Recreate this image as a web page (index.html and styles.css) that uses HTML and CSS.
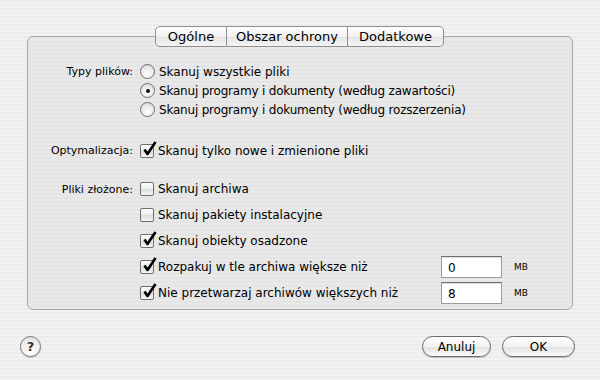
FILE: index.html
```html
<!DOCTYPE html>
<html>
  <head>
    <meta charset="UTF-8" />
    <title>Preferencje</title>
    <link rel="stylesheet" href="styles.css">
  </head>
  <body>
    <div class="dialog">
      <div class="tabs">
        <span class="tab tab-general selected">Ogólne</span>
        <span class="tab tab-area">Obszar ochrony</span>
        <span class="tab tab-extra">Dodatkowe</span>
      </div>

      <div class="tab-box">
        <!-- typy plikow -->
        <div class="group group-types">
          <div class="row">
            <span class="label">Typy plików:</span>
            <span class="radio"></span>
            <span class="text">Skanuj wszystkie pliki</span>
          </div>
          <div class="row">
            <span class="label"></span>
            <span class="radio checked"></span>
            <span class="text tight">Skanuj programy i dokumenty (według zawartości)</span>
          </div>
          <div class="row">
            <span class="label"></span>
            <span class="radio"></span>
            <span class="text tight">Skanuj programy i dokumenty (według rozszerzenia)</span>
          </div>
        </div>

        <!-- optymalizacja -->
        <div class="group group-opt">
          <div class="row">
            <span class="label">Optymalizacja:</span>
            <span class="check checked"></span>
            <span class="text">Skanuj tylko nowe i zmienione pliki</span>
          </div>
        </div>

        <!-- pliki zlozone -->
        <div class="group group-complex">
          <div class="row tall">
            <span class="label">Pliki złożone:</span>
            <span class="check"></span>
            <span class="text">Skanuj archiwa</span>
          </div>
          <div class="row tall">
            <span class="label"></span>
            <span class="check"></span>
            <span class="text">Skanuj pakiety instalacyjne</span>
          </div>
          <div class="row tall">
            <span class="label"></span>
            <span class="check checked"></span>
            <span class="text">Skanuj obiekty osadzone</span>
          </div>
          <div class="row tall">
            <span class="label"></span>
            <span class="check checked"></span>
            <span class="text grow">Rozpakuj w tle archiwa większe niż</span>
            <span class="field">0</span>
            <span class="unit">MB</span>
          </div>
          <div class="row tall">
            <span class="label"></span>
            <span class="check checked"></span>
            <span class="text grow">Nie przetwarzaj archiwów większych niż</span>
            <span class="field">8</span>
            <span class="unit">MB</span>
          </div>
        </div>
      </div>

      <div class="footer">
        <span class="help">?</span>
        <div class="buttons">
          <button class="btn">Anuluj</button>
          <button class="btn btn-ok">OK</button>
        </div>
      </div>
    </div>
  </body>
</html>
```

FILE: styles.css
```css
html, body {
  margin: 0;
  padding: 0;
}

body {
  width: 600px;
  height: 380px;
  font-family: "DejaVu Sans", "Liberation Sans", sans-serif;
  font-size: 12px;
  color: #000;
  background: repeating-linear-gradient(#ececec 0 2px, #f2f2f2 2px 4px);
}

.dialog {
  padding-top: 26px;
}

.tabs {
  display: flex;
  justify-content: center;
  position: relative;
  z-index: 1;
  margin-left: -1px;
}

.tab {
  height: 19px;
  line-height: 19px;
  text-align: center;
  font-size: 13px;
  background: linear-gradient(#ffffff, #f1f1f1 50%, #e4e4e4 51%, #f4f4f4);
  border: 1px solid #8e8e8e;
  border-left: none;
}

.tab-general {
  width: 70px;
  border-left: 1px solid #8e8e8e;
  border-radius: 5px 0 0 5px;
}

.tab-area {
  width: 120px;
}

.tab-extra {
  width: 95px;
  border-radius: 0 5px 5px 0;
}

.tab-box {
  margin: -11px 27px 0 27px;
  height: 274px;
  box-sizing: border-box;
  border: 1px solid #a9a9a9;
  border-radius: 6px;
  background: repeating-linear-gradient(#e4e4e4 0 2px, #e9e9e9 2px 4px);
  padding-top: 25px;
}

.row {
  display: flex;
  align-items: center;
  height: 19px;
}

.row.tall {
  height: 26px;
}

.label {
  width: 112px;
  text-align: right;
  font-size: 11px;
  padding-right: 7px;
  box-sizing: border-box;
}

.text {
  margin-left: 4px;
  white-space: nowrap;
}

.text.tight {
  letter-spacing: -0.2px;
}

.text.grow {
  width: 283px;
}

.group-opt {
  margin-top: 22px;
}

.group-complex {
  margin-top: 16px;
}

.radio {
  width: 13px;
  height: 13px;
  border: 1px solid #6f6f6f;
  border-radius: 50%;
  background: radial-gradient(circle at 50% 70%, #ffffff, #e8e8e8 60%, #d0d0d0);
  position: relative;
}

.radio.checked::after {
  content: "";
  position: absolute;
  left: 4.5px;
  top: 4.5px;
  width: 4px;
  height: 4px;
  border-radius: 50%;
  background: #111;
}

.check {
  width: 12px;
  height: 12px;
  border: 1px solid #6f6f6f;
  border-radius: 2px;
  background: linear-gradient(#fdfdfd, #ececec 50%, #dcdcdc 51%, #f6f6f6);
  position: relative;
}

.check.checked::after {
  content: "";
  position: absolute;
  left: 2px;
  top: -4px;
  width: 14px;
  height: 15px;
  background: url("data:image/svg+xml;utf8,<svg xmlns='http://www.w3.org/2000/svg' width='14' height='15' viewBox='0 0 14 15'><path d='M1.5 8.5 L4.5 13 L12.5 1' fill='none' stroke='black' stroke-width='2.6' stroke-linejoin='round'/></svg>") no-repeat;
}

.field {
  width: 61px;
  height: 22px;
  line-height: 22px;
  box-sizing: border-box;
  padding-left: 6px;
  background: #fff;
  border: 1px solid #9a9a9a;
  border-top-color: #6f6f6f;
  box-shadow: inset 0 1px 1px rgba(0, 0, 0, 0.15);
}

.unit {
  font-size: 9px;
  margin-left: 12px;
}

.footer {
  display: flex;
  justify-content: space-between;
  align-items: center;
  padding: 26px 25px 0 20px;
}

.help {
  width: 19px;
  height: 19px;
  border: 1px solid #777;
  border-radius: 50%;
  background: radial-gradient(circle at 50% 80%, #ffffff, #efefef 60%, #d8d8d8);
  text-align: center;
  line-height: 19px;
  font-size: 13px;
  font-weight: bold;
  color: #333;
  box-shadow: 0 1px 1px rgba(0, 0, 0, 0.2);
}

.buttons {
  display: flex;
  gap: 11px;
}

.btn {
  height: 21px;
  width: 69px;
  padding: 0;
  font-family: "DejaVu Sans", "Liberation Sans", sans-serif;
  font-size: 12px;
  color: #000;
  border: 1px solid #6a6a6a;
  border-radius: 11px;
  background: linear-gradient(#ffffff, #f2f2f2 50%, #e2e2e2 51%, #fafafa);
  box-shadow: 0 1px 1px rgba(0, 0, 0, 0.2);
}

.btn-ok {
  width: 73px;
}
```
